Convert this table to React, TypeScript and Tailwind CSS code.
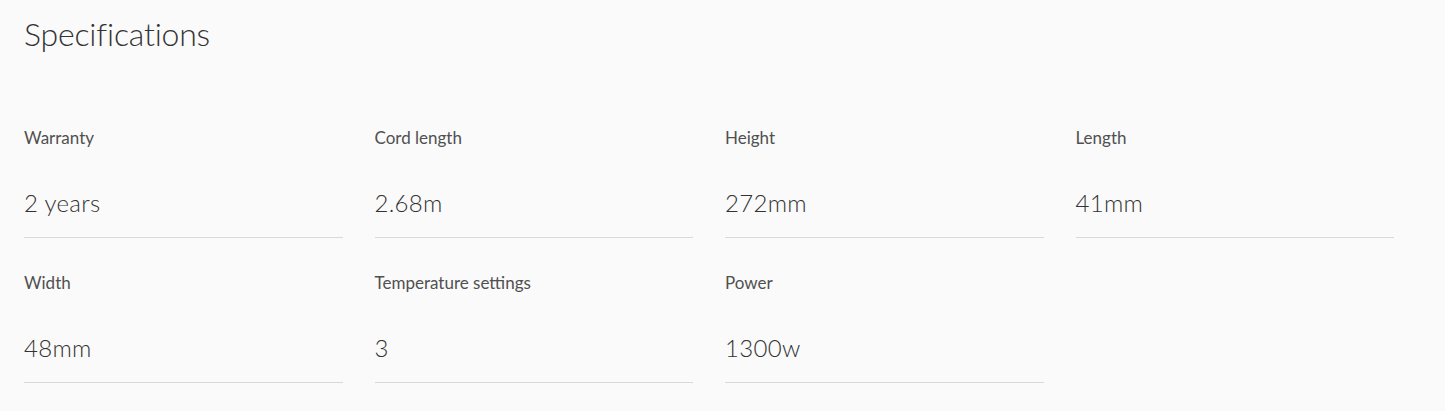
const specs = [
  { label: 'Warranty', value: '2 years' },
  { label: 'Cord length', value: '2.68m' },
  { label: 'Height', value: '272mm' },
  { label: 'Length', value: '41mm' },
  { label: 'Width', value: '48mm' },
  { label: 'Temperature settings', value: '3' },
  { label: 'Power', value: '1300w' },
]

export default function App() {
  return (
    <div className="min-h-[411px] w-full bg-[#fafafa] pl-6 pt-[12px] font-['Lato',sans-serif] text-[#333]">
      <h2 className="text-[32px] leading-[44px] font-light tracking-[-0.2px]">Specifications</h2>
      <div className="mt-[73px] grid w-[1370px] grid-cols-4 gap-x-8 gap-y-[36px]">
        {specs.map((s) => (
          <div key={s.label} className="border-b border-[#d9d9d9] pb-[20px]">
            <div className="h-[18px] text-[17px] leading-[18px] text-[#505050]">{s.label}</div>
            <div className="mt-[42px] text-[24px] leading-[28px] font-light tracking-[0.3px]">{s.value}</div>
          </div>
        ))}
      </div>
    </div>
  )
}
